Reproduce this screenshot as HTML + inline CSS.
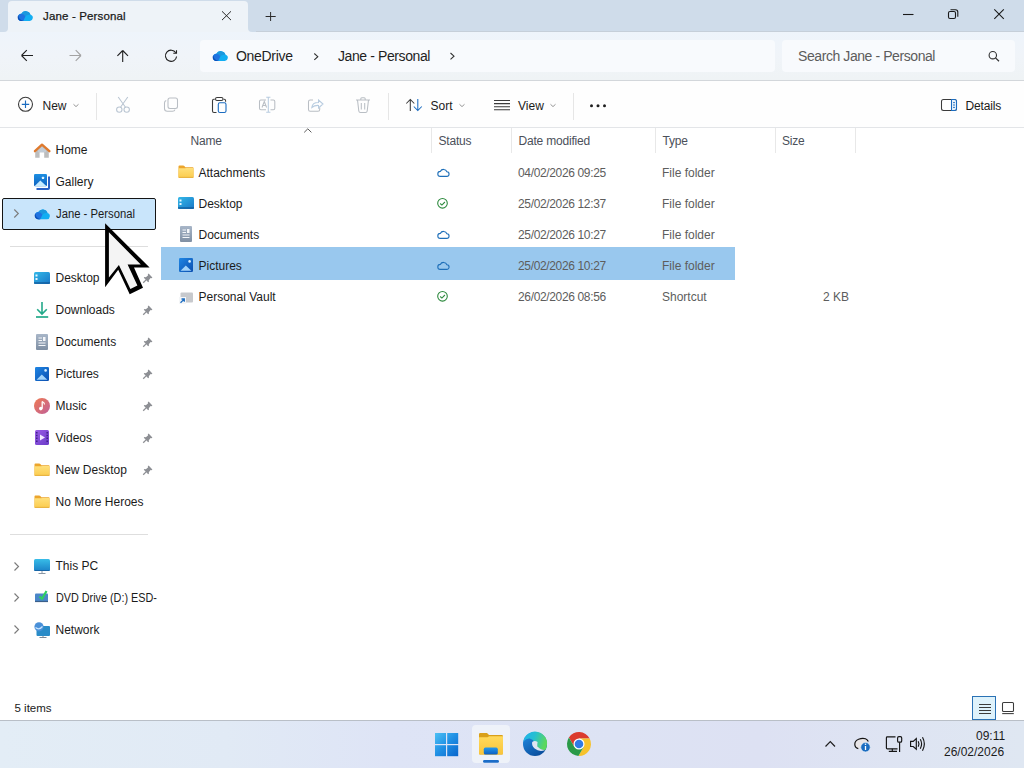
<!DOCTYPE html>
<html><head><meta charset="utf-8">
<style>
*{margin:0;padding:0;box-sizing:border-box}
html,body{width:1024px;height:768px;overflow:hidden;background:#fff;font-family:"Liberation Sans",sans-serif;font-size:12px;color:#1b1b1b}
.a{position:absolute}
.t{position:absolute;white-space:nowrap;line-height:12px;font-size:12px}
.g{color:#5d5d5d}
.h{color:#4b505a;letter-spacing:-0.2px}
.d{letter-spacing:-0.35px}
svg.ov{position:absolute;left:0;top:0;width:1024px;height:768px;overflow:visible}
</style></head><body>
<!-- ===== backgrounds ===== -->
<div class="a" style="left:0;top:0;width:1024px;height:32px;background:#cfdcea"></div>
<div class="a" style="left:0;top:31px;width:1024px;height:49px;background:linear-gradient(180deg,#eef4fb 0%,#f0f4f9 50%,#eff3f5 100%)"></div>
<div class="a" style="left:256px;top:31px;width:768px;height:1px;background:#c6cfd9"></div>
<!-- tab -->
<div class="a" style="left:8px;top:1px;width:240px;height:31px;background:#eef3f8;border-radius:4px 4px 0 0"></div>
<div class="a" style="left:0;top:24px;width:8px;height:8px;background:#eef3f8"></div>
<div class="a" style="left:0;top:16px;width:8px;height:16px;background:#cfdcea;border-radius:0 0 4px 0"></div>
<div class="a" style="left:248px;top:24px;width:8px;height:8px;background:#eef3f8"></div>
<div class="a" style="left:248px;top:16px;width:8px;height:16px;background:#cfdcea;border-radius:0 0 0 4px"></div>
<!-- breadcrumb + search -->
<div class="a" style="left:200px;top:40px;width:575px;height:32px;background:#f8fafd;border-radius:4px"></div>
<div class="a" style="left:782px;top:40px;width:233px;height:32px;background:#f8fafd;border-radius:4px"></div>
<div class="a" style="left:0;top:80px;width:1024px;height:1px;background:#d3d7db"></div>
<!-- toolbar -->
<div class="a" style="left:0;top:81px;width:1024px;height:46px;background:#fefefe"></div>
<div class="a" style="left:0;top:127px;width:1024px;height:1px;background:#e3e5e8"></div>
<div class="a" style="left:96px;top:93px;width:1px;height:27px;background:#e6e6e6"></div>
<div class="a" style="left:388px;top:93px;width:1px;height:27px;background:#e6e6e6"></div>
<div class="a" style="left:573px;top:93px;width:1px;height:27px;background:#e6e6e6"></div>
<!-- nav selection -->
<div class="a" style="left:2px;top:198px;width:154px;height:32px;background:#c9e5fb;border:1px solid #141414;border-radius:2px"></div>
<div class="a" style="left:10px;top:246px;width:138px;height:1px;background:#dedede"></div>
<div class="a" style="left:10px;top:534px;width:138px;height:1px;background:#dedede"></div>
<!-- column dividers -->
<div class="a" style="left:431px;top:128px;width:1px;height:25px;background:#e8e8e8"></div>
<div class="a" style="left:511px;top:128px;width:1px;height:25px;background:#e8e8e8"></div>
<div class="a" style="left:655px;top:128px;width:1px;height:25px;background:#e8e8e8"></div>
<div class="a" style="left:775px;top:128px;width:1px;height:25px;background:#e8e8e8"></div>
<div class="a" style="left:855px;top:128px;width:1px;height:25px;background:#e8e8e8"></div>
<!-- row selection -->
<div class="a" style="left:161px;top:247px;width:574px;height:33px;background:#99c8ee"></div>
<!-- status view buttons -->
<div class="a" style="left:972px;top:696px;width:24px;height:24px;background:#def2fb;border:1.5px solid #2a72b5"></div>
<!-- taskbar -->
<div class="a" style="left:0;top:720px;width:1024px;height:48px;background:linear-gradient(90deg,#e3edf6 0%,#e1eaf5 22%,#dee4f6 38%,#dde3f4 60%,#dde1f3 74%,#dfe7f2 100%)"></div>
<div class="a" style="left:0;top:720px;width:1024px;height:1px;background:#b9bfc7"></div>
<div class="a" style="left:472px;top:725px;width:38px;height:38px;background:#eef2f9;border-radius:4px"></div>

<!-- ===== icons ===== -->
<svg class="ov" viewBox="0 0 1024 768">
<defs>
<linearGradient id="od" x1="0" y1="0" x2="1" y2="1"><stop offset="0" stop-color="#0b58c0"/><stop offset="0.5" stop-color="#1a86e0"/><stop offset="1" stop-color="#32b8f2"/></linearGradient>
<linearGradient id="fold" x1="0" y1="0" x2="0" y2="1"><stop offset="0" stop-color="#ffe07c"/><stop offset="1" stop-color="#fbcc4e"/></linearGradient>
<linearGradient id="desk" x1="0" y1="0" x2="1" y2="1"><stop offset="0" stop-color="#33b8e8"/><stop offset="1" stop-color="#1a78c8"/></linearGradient>
<linearGradient id="doc" x1="0" y1="0" x2="0" y2="1"><stop offset="0" stop-color="#a8b6c8"/><stop offset="1" stop-color="#7f8fa3"/></linearGradient>
<linearGradient id="mus" x1="0" y1="0" x2="1" y2="1"><stop offset="0" stop-color="#f07a50"/><stop offset="1" stop-color="#c0609a"/></linearGradient>
<linearGradient id="vid" x1="0" y1="0" x2="1" y2="1"><stop offset="0" stop-color="#9a5ce6"/><stop offset="1" stop-color="#6a3cc8"/></linearGradient>
<linearGradient id="pc" x1="0" y1="0" x2="0" y2="1"><stop offset="0" stop-color="#38bde8"/><stop offset="1" stop-color="#1b82c8"/></linearGradient>
<linearGradient id="pic" x1="0" y1="0" x2="1" y2="1"><stop offset="0" stop-color="#1f86e4"/><stop offset="1" stop-color="#0b4fb0"/></linearGradient>
<linearGradient id="win" gradientUnits="userSpaceOnUse" x1="435" y1="733" x2="458" y2="756"><stop offset="0" stop-color="#4cc0f4"/><stop offset="0.5" stop-color="#1f8fe4"/><stop offset="1" stop-color="#0a66cc"/></linearGradient>
<g id="cloud"><path d="M3.9 10.9 H12.9 A3.1 3.1 0 0 0 13.5 4.8 A5 5 0 0 0 4.3 3.7 A3.65 3.65 0 0 0 3.9 10.9 Z" fill="#12aef2"/><path d="M4.3 3.7 A5 5 0 0 1 13.5 4.8 A3.1 3.1 0 0 0 12.2 4.7 Q9.6 4.9 8.2 6.6 Q6.8 4 4.3 3.7 Z" fill="#1b98de"/><path d="M3.9 10.9 A3.65 3.65 0 0 1 4.3 3.7 Q7.3 3.9 8.4 6.5 L6.3 10.9 Z" fill="#1f73e0"/><path d="M3.9 10.9 A3.65 3.65 0 0 1 1.5 4.9 Q1.2 9.2 6.3 10.9 Z" fill="#0b4db6"/></g>
<g id="folder"><path d="M0.5 1.4 Q0.5 0.5 1.4 0.5 H5 Q6 0.5 6.8 1.6 L7.4 2.2 H14.8 Q15.5 2.2 15.5 2.9 V12.2 Q15.5 12.8 14.9 12.8 H1.1 Q0.5 12.8 0.5 12.2 Z" fill="#eca52c"/><path d="M0.5 3.3 H7 L8.4 2.9 H15.5 V12.2 Q15.5 12.8 14.9 12.8 H1.1 Q0.5 12.8 0.5 12.2 Z" fill="url(#fold)"/><path d="M1 12.4 H15" stroke="#e2ac3c" stroke-width="0.8"/></g>
<g id="pin"><path d="M5.6 0.6 L9.4 4.4 L8.6 5.2 L7.6 5 L5.8 7.2 L6 8.6 L5.2 9.2 L0.8 4.8 L1.4 4 L2.8 4.2 L5 2.4 L4.8 1.4 Z" fill="#8d8f94"/><path d="M3.1 6.9 L0.2 9.8" stroke="#8d8f94" stroke-width="1.3"/></g>
<g id="chev"><path d="M0.5 0.5 L4.5 4.5 L0.5 8.5" fill="none" stroke="#7c7c7c" stroke-width="1.15"/></g><g id="chevd"><path d="M0.5 0.5 L4 3.7 L0.5 6.9" fill="none" stroke="#333" stroke-width="1.1"/></g>
<g id="scl"><path d="M0.5 0 H14.5" stroke="#1f6fc0"/></g>
</defs>

<!-- tab cloud -->
<use href="#cloud" x="17" y="10"/>
<!-- tab close -->
<path d="M222 11.3 L231 20.1 M231 11.3 L222 20.1" stroke="#2a2a2a" stroke-width="1"/>
<!-- new tab + -->
<path d="M265.6 16.5 H275.7 M270.6 12 V21" stroke="#2a2a2a" stroke-width="1"/>
<!-- window controls -->
<path d="M903 14.5 H913.5" stroke="#1a1a1a" stroke-width="1.1"/>
<rect x="948.5" y="11.5" width="7" height="7" rx="1.5" fill="none" stroke="#1a1a1a" stroke-width="1.1"/>
<path d="M950.5 9.7 H955.5 Q957.8 9.7 957.8 12 V16.8" fill="none" stroke="#1a1a1a" stroke-width="1.1"/>
<path d="M994.3 9.3 L1003.8 18.8 M1003.8 9.3 L994.3 18.8" stroke="#1a1a1a" stroke-width="1.1"/>

<!-- nav buttons -->
<path d="M21.5 55.5 H33 M21.5 55.5 L26.8 50.2 M21.5 55.5 L26.8 60.8" fill="none" stroke="#1f1f1f" stroke-width="1.1"/>
<path d="M81 55.5 H69.5 M81 55.5 L75.7 50.2 M81 55.5 L75.7 60.8" fill="none" stroke="#a3a3a3" stroke-width="1.1"/>
<path d="M122.7 50.5 V62 M122.7 50.5 L117.4 55.8 M122.7 50.5 L128 55.8" fill="none" stroke="#1f1f1f" stroke-width="1.1"/>
<path d="M175.8 52.8 A5.6 5.6 0 1 0 176.6 56.5" fill="none" stroke="#1f1f1f" stroke-width="1.1"/>
<path d="M176.5 50.2 V53.3 H173.3" fill="none" stroke="#1f1f1f" stroke-width="1.1"/>

<!-- breadcrumb -->
<use href="#cloud" x="212" y="50"/>
<use href="#chevd" x="313.8" y="53"/>
<use href="#chevd" x="450" y="52.5"/>
<!-- search icon -->
<circle cx="992.8" cy="55.2" r="3.7" fill="none" stroke="#303030" stroke-width="1.1"/>
<path d="M995.5 57.9 L999 61.3" stroke="#303030" stroke-width="1.2"/>

<!-- toolbar icons -->
<circle cx="25.5" cy="104.3" r="7" fill="none" stroke="#3b3b3b" stroke-width="1.1"/>
<path d="M21.8 104.3 H29.2 M25.5 100.6 V108" stroke="#1b6cc0" stroke-width="1.15"/>
<path d="M73.5 104.3 L76 106.6 L78.5 104.3" fill="none" stroke="#8a8a8a" stroke-width="0.9"/>
<!-- cut -->
<g fill="none" stroke="#b9c5d2" stroke-width="1.05">
<circle cx="119.3" cy="109.6" r="2.7"/><circle cx="126.7" cy="109.6" r="2.7"/>
<path d="M120.5 107.2 L127.8 97 M125.5 107.2 L118.2 97"/>
</g>
<!-- copy -->
<g fill="none" stroke="#b9bec4" stroke-width="1.05">
<rect x="168" y="98" width="9.5" height="10.5" rx="2"/>
<path d="M166.2 100.5 Q164.5 101 164.5 103 V108.5 Q164.5 111.3 167.3 111.3 H172.5 Q174.5 111.3 175 109.6"/>
</g>
<!-- paste -->
<path d="M214.8 99.3 H213.8 Q212.5 99.3 212.5 100.8 V111 Q212.5 112.5 214 112.5 H216.5" fill="none" stroke="#3b3b3b" stroke-width="1.1"/>
<path d="M223.5 99.3 H224.2 Q225.6 99.3 225.6 100.8 V101.8" fill="none" stroke="#3b3b3b" stroke-width="1.1"/>
<rect x="215.5" y="97.5" width="7.5" height="3" rx="1.5" fill="none" stroke="#3b3b3b" stroke-width="1.05"/>
<rect x="218.3" y="102.8" width="7.7" height="9.7" rx="1.6" fill="none" stroke="#1b6cc0" stroke-width="1.1"/>
<!-- rename -->
<g fill="none" stroke="#b9bec4" stroke-width="1.05">
<path d="M266 100 H260.8 Q259.5 100 259.5 101.5 V108.3 Q259.5 109.8 261 109.8 H266"/>
<path d="M270.5 100 H273.3 Q274.8 100 274.8 101.5 V108.3 Q274.8 109.8 273.3 109.8 H270.5"/>
<path d="M262 107.5 L264.3 101.5 L266.6 107.5 M262.8 105.5 H265.8"/>
</g>
<path d="M268.3 97.3 V112.3 M266.2 97.3 H270.4 M266.2 112.3 H270.4" fill="none" stroke="#b8cce0" stroke-width="1.05"/>
<!-- share -->
<g fill="none" stroke="#b9bec4" stroke-width="1.05">
<path d="M313 100 H310.2 Q308.5 100 308.5 101.7 V109.5 Q308.5 111.2 310.2 111.2 H318 Q319.7 111.2 319.7 109.5 V107.5"/>
</g>
<path d="M311.8 107.5 Q312.5 102.5 318.5 102.6 V100 L323 104 L318.5 108 V105.4 Q314.5 105.2 311.8 107.5 Z" fill="none" stroke="#b8cce0" stroke-width="1.05"/>
<!-- delete -->
<g fill="none" stroke="#b9bec4" stroke-width="1.05">
<path d="M356 100 H370 M360.8 100 V98.8 Q360.8 97.8 361.8 97.8 H364.2 Q365.2 97.8 365.2 98.8 V100"/>
<path d="M357.5 100 L358.8 111 Q359 112.5 360.5 112.5 H365.5 Q367 112.5 367.2 111 L368.5 100"/>
<path d="M361.3 103 V109.5 M364.7 103 V109.5"/>
</g>
<!-- sort -->
<path d="M410.3 99.5 V111 M406.3 103.5 L410.3 99.5 L414.3 103.5" fill="none" stroke="#3b3b3b" stroke-width="1.05"/>
<path d="M417.8 99 V110.5 M413.8 106.5 L417.8 110.5 L421.8 106.5" fill="none" stroke="#1b6cc0" stroke-width="1.05"/>
<path d="M459.5 104.3 L462 106.6 L464.5 104.3" fill="none" stroke="#8a8a8a" stroke-width="0.9"/>
<!-- view -->
<path d="M494 100.5 H510 M494 103.6 H510 M494 106.7 H510 M494 109.8 H510" stroke="#3b3b3b" stroke-width="1.05"/>
<path d="M550.5 104.3 L553 106.6 L555.5 104.3" fill="none" stroke="#8a8a8a" stroke-width="0.9"/>
<!-- more -->
<circle cx="591.5" cy="105.7" r="1.5" fill="#1f1f1f"/><circle cx="598" cy="105.7" r="1.5" fill="#1f1f1f"/><circle cx="604.5" cy="105.7" r="1.5" fill="#1f1f1f"/>
<!-- details -->
<rect x="941.5" y="99.5" width="15" height="11" rx="2" fill="none" stroke="#3b3b3b" stroke-width="1.05"/>
<path d="M951.5 99.5 H954.5 Q956.5 99.5 956.5 101.5 V108.5 Q956.5 110.5 954.5 110.5 H951.5 Z" fill="#e8f2fb" stroke="#1b6cc0" stroke-width="1.05"/>
<path d="M953 102.6 H955 M953 105 H955 M953 107.4 H955" stroke="#1b6cc0" stroke-width="0.9"/>

<!-- header sort caret -->
<path d="M304.2 132.4 L307.8 128.8 L311.4 132.4" fill="none" stroke="#5a5a5a" stroke-width="1"/>

<!-- ===== file rows ===== -->
<use href="#folder" x="178" y="165"/>
<!-- desktop -->
<g transform="translate(178,197)"><rect x="0" y="0" width="16" height="12" rx="1.5" fill="url(#desk)"/><rect x="1.5" y="2.5" width="2" height="2" fill="#e8f7ff"/><rect x="1.5" y="6" width="2" height="2" fill="#e8f7ff"/><path d="M0 11 H16" stroke="#115a9a" stroke-width="1.3"/></g>
<!-- documents -->
<g transform="translate(180,226)"><rect x="0" y="0" width="12" height="16" rx="1" fill="url(#doc)"/><path d="M2.5 4 H6 M2.5 6.5 H6 M2.5 9 H9.5 M2.5 11.5 H9.5" stroke="#f4f6f9" stroke-width="1.2"/><rect x="7" y="3" width="2.5" height="4" fill="#f4f6f9"/></g>
<!-- pictures -->
<g transform="translate(179,258)"><rect x="0" y="0" width="14" height="14" rx="1.2" fill="url(#pic)"/><path d="M1.6 12.8 L6.8 7.4 L12.4 12.8 Z" fill="#a3d4fa"/><circle cx="10.6" cy="3.4" r="1.3" fill="#d8f0ff"/></g>
<!-- personal vault shortcut -->
<g transform="translate(179,292)"><rect x="1.5" y="0.5" width="12.5" height="10" rx="1" fill="#c7c9cd"/><rect x="0" y="5" width="7" height="7" fill="#f4f6f8"/><path d="M1.5 10.8 L5.2 7.1 M2.5 7 H5.3 V9.8" fill="none" stroke="#1b6cc0" stroke-width="1.3"/></g>

<!-- status icons -->
<g fill="none" stroke="#1e6fb9" stroke-width="1.1">
<path d="M440.3 176.4 H446.6 A2.3 2.3 0 0 0 446.9 171.8 A3.6 3.6 0 0 0 440.3 171.4 A2.5 2.5 0 0 0 440.3 176.4 Z"/>
<path d="M440.3 238.4 H446.6 A2.3 2.3 0 0 0 446.9 233.8 A3.6 3.6 0 0 0 440.3 233.4 A2.5 2.5 0 0 0 440.3 238.4 Z"/>
<path d="M440.3 269.4 H446.6 A2.3 2.3 0 0 0 446.9 264.8 A3.6 3.6 0 0 0 440.3 264.4 A2.5 2.5 0 0 0 440.3 269.4 Z"/>
</g>
<g fill="none" stroke="#2d8a3e" stroke-width="1.1">
<circle cx="442.5" cy="203.3" r="4.8"/><path d="M440.2 203.5 L441.9 205.1 L444.9 202"/>
<circle cx="442.5" cy="296.3" r="4.8"/><path d="M440.2 296.5 L441.9 298.1 L444.9 295"/>
</g>

<!-- ===== nav pane icons ===== -->
<!-- home -->
<g transform="translate(34,143)"><path d="M1.2 7.6 V14.7 H5.6 V9.2 H10.2 V14.7 H14.8 V7.6 L8 1.8 Z" fill="#bdbdbd"/><path d="M4 7.6 L8 3.6 L12.2 7.6 V9.2 H4 Z" fill="#c2ccd6"/><path d="M0.9 8.2 L8 1.6 L15.4 8.2" fill="none" stroke="#df7a2e" stroke-width="2.3" stroke-linejoin="round" stroke-linecap="round"/></g>
<!-- gallery -->
<linearGradient id="gal" x1="0" y1="0" x2="0" y2="1"><stop offset="0" stop-color="#1d8fe2"/><stop offset="1" stop-color="#0f62c0"/></linearGradient><g transform="translate(34,174)"><path d="M15 2.5 V14.2 Q15 15 14.2 15 H2.5" fill="none" stroke="#2a62c6" stroke-width="2"/><rect x="0" y="0" width="13" height="12.2" rx="1.2" fill="url(#gal)"/><path d="M0.5 12.2 L6.3 6.6 L12.6 12.2 Z" fill="#c6ebff"/><rect x="7.9" y="2.8" width="2.2" height="2.2" rx="0.5" fill="#dff4ff"/></g>
<!-- jane cloud -->
<use href="#cloud" x="34" y="208.3"/>
<use href="#chev" x="13.8" y="209"/>
<!-- desktop -->
<g transform="translate(34,272)"><rect x="0" y="0" width="16" height="12" rx="1.5" fill="url(#desk)"/><rect x="1.5" y="2.5" width="2" height="2" fill="#e8f7ff"/><rect x="1.5" y="6" width="2" height="2" fill="#e8f7ff"/><path d="M0 11 H16" stroke="#115a9a" stroke-width="1.3"/></g>
<!-- downloads -->
<g transform="translate(36,302)" fill="none" stroke="#23a98a" stroke-width="1.6"><path d="M6 0 V12 M1.2 7.2 L6 12 L10.8 7.2"/><path d="M0 15 H12.2" stroke-width="1.7"/></g>
<!-- documents -->
<g transform="translate(36,334)"><rect x="0" y="0" width="12" height="16" rx="1" fill="url(#doc)"/><path d="M2.5 4 H6 M2.5 6.5 H6 M2.5 9 H9.5 M2.5 11.5 H9.5" stroke="#f4f6f9" stroke-width="1.2"/><rect x="7" y="3" width="2.5" height="4" fill="#f4f6f9"/></g>
<!-- pictures -->
<g transform="translate(35,367)"><rect x="0" y="0" width="14" height="14" rx="1.2" fill="url(#pic)"/><path d="M1.6 12.8 L6.8 7.4 L12.4 12.8 Z" fill="#a3d4fa"/><circle cx="10.6" cy="3.4" r="1.3" fill="#d8f0ff"/></g>
<!-- music -->
<g transform="translate(34,398)"><circle cx="8" cy="8" r="8" fill="url(#mus)"/><path d="M8.2 3.5 V10.5" stroke="#fff" stroke-width="1.3"/><circle cx="6.8" cy="10.6" r="1.8" fill="#fff"/><path d="M8.2 3.5 Q10.5 4.5 10.5 6.5" fill="none" stroke="#fff" stroke-width="1.2"/></g>
<!-- videos -->
<g transform="translate(35,430)"><rect x="0" y="0" width="14" height="15" rx="1.5" fill="url(#vid)"/><path d="M5 4.5 V10.5 L10 7.5 Z" fill="#f0e8ff"/><path d="M1.8 2 V13 M12.2 2 V13" stroke="#3a1f80" stroke-width="1.4" stroke-dasharray="1.5 1.3"/></g>
<!-- folders -->
<use href="#folder" x="34" y="463"/>
<use href="#folder" x="34" y="495"/>
<!-- pins -->
<use href="#pin" x="143" y="273"/>
<use href="#pin" x="143" y="305"/>
<use href="#pin" x="143" y="337"/>
<use href="#pin" x="143" y="369"/>
<use href="#pin" x="143" y="401"/>
<use href="#pin" x="143" y="433"/>
<use href="#pin" x="143" y="465"/>
<!-- this pc -->
<use href="#chev" x="14" y="562"/>
<g transform="translate(34,559)"><rect x="0" y="0" width="16" height="12" rx="1.5" fill="url(#pc)"/><path d="M0.5 11.5 H15.5" stroke="#1766a8" stroke-width="1"/><path d="M8 12 V14 M4.5 14.5 H11.5" stroke="#8a97a5" stroke-width="1"/></g>
<!-- dvd -->
<use href="#chev" x="14" y="593"/>
<g transform="translate(35,590)"><rect x="0" y="3.5" width="13" height="8.5" rx="1" fill="#4a86c8"/><path d="M0 11.5 H13" stroke="#3b5f8a" stroke-width="1.2"/><path d="M4.5 6.5 L7 8.8 L11.5 1" fill="none" stroke="#2ed060" stroke-width="2.2"/></g>
<!-- network -->
<use href="#chev" x="14" y="625"/>
<g transform="translate(34,622)"><rect x="2.5" y="4" width="13.5" height="10" rx="1" fill="#2a8cc8"/><path d="M9 14 V15.5 M5.5 15.5 H12.5" stroke="#7d8a98" stroke-width="1"/><circle cx="5" cy="4.8" r="4.6" fill="#4a90d8"/><path d="M1.5 5.5 Q5 8.5 8.5 4.5" fill="none" stroke="#c8e4ff" stroke-width="1.2"/></g>

<!-- status bar view buttons -->
<path d="M979 704.5 H991 M979 707.5 H991 M979 710.5 H991 M979 713.5 H991" stroke="#3b3b3b" stroke-width="1.05"/>
<rect x="1002.5" y="702.5" width="11" height="9" rx="1" fill="none" stroke="#3b3b3b" stroke-width="1.05"/>
<path d="M1002.2 713.6 H1013.8" stroke="#3b3b3b" stroke-width="1.05"/>

<!-- ===== taskbar ===== -->
<g fill="url(#win)"><rect x="435" y="733" width="11" height="11"/><rect x="447.2" y="733" width="11" height="11"/><rect x="435" y="745.2" width="11" height="11"/><rect x="447.2" y="745.2" width="11" height="11"/></g>
<!-- explorer -->
<linearGradient id="exb" x1="0" y1="0" x2="0" y2="1"><stop offset="0" stop-color="#ffda5c"/><stop offset="1" stop-color="#f8c43a"/></linearGradient><linearGradient id="exr" x1="0" y1="0" x2="0" y2="1"><stop offset="0" stop-color="#2298ec"/><stop offset="1" stop-color="#0e5fc0"/></linearGradient><g transform="translate(479,733)"><path d="M0 1.2 Q0 0 1.2 0 H8 L10 2 H22.8 Q24 2 24 3.2 V20.5 Q24 21.5 23 21.5 H1 Q0 21.5 0 20.5 Z" fill="#d9a01a"/><path d="M0 4.2 H8.5 L10.2 3.2 H24 V20.5 Q24 21.5 23 21.5 H1 Q0 21.5 0 20.5 Z" fill="url(#exb)"/><rect x="4.8" y="14.6" width="14" height="7" rx="1.6" fill="url(#exr)"/></g>
<rect x="483" y="760" width="16" height="2.8" rx="1.4" fill="#1b6cc8"/>
<!-- edge -->
<defs>
<linearGradient id="eb" x1="0" y1="0" x2="0.6" y2="1"><stop offset="0" stop-color="#2290e8"/><stop offset="1" stop-color="#0b4f9e"/></linearGradient>
<linearGradient id="eg" x1="0" y1="0" x2="1" y2="0.3"><stop offset="0" stop-color="#1fb2ec"/><stop offset="0.5" stop-color="#26bfd2"/><stop offset="1" stop-color="#5ad85e"/></linearGradient>
</defs>
<g transform="translate(535,744)">
<circle r="12" fill="url(#eb)"/>
<path d="M-11.7 -2.6 A12 12 0 1 1 11.6 3 Q11 6 9.8 6.3 Q5 5.6 2.4 3.6 Q1.6 1 -0.2 -1.8 Q-2.3 -4.6 -5.3 -5.4 Q-8.8 -5.6 -11.7 -2.6 Z" fill="url(#eg)"/>
<path d="M-2.8 -2 Q-0.5 -3.8 2.6 -2.1 Q2 0.5 2.3 2.4 Q4.8 5.4 9.8 6.3 Q4 8.2 -0.4 4.6 Q-3.6 1.5 -2.8 -2 Z" fill="#dfe5f2"/>
</g>
<!-- chrome -->
<g transform="translate(579,744)">
<path d="M-10.095 -6.487 A12 12 0 0 1 10.665 -5.5 L0 -5.5 L-4.763 2.75 Z" fill="#db3b2e"/>
<path d="M10.665 -5.5 A12 12 0 0 1 -0.57 11.986 L4.763 2.75 L0 -5.5 Z" fill="#f6c22c"/>
<path d="M-0.57 11.986 A12 12 0 0 1 -10.095 -6.487 L-4.763 2.75 L4.763 2.75 Z" fill="#2a9a48"/>
<circle r="5.5" fill="#fff"/><circle r="4.3" fill="#2f7be6"/>
</g>
<!-- tray -->
<path d="M825.5 746.5 L830.3 741.5 L835 746.5" fill="none" stroke="#1f1f1f" stroke-width="1.2"/>
<path d="M858.3 748.6 Q854.8 747.8 854.8 744.3 Q854.8 740.6 858.6 739.2 Q862.5 737.8 865.5 738.8 Q867.4 739.6 868.3 741.6 L864 748.6 Z" fill="#e9e6e8"/>
<path d="M858.3 748.6 Q854.8 747.8 854.8 744.3 Q854.8 740.6 858.6 739.2 Q862.5 737.8 865.5 738.8 Q867.4 739.6 868.3 741.6" fill="none" stroke="#141414" stroke-width="1.2"/>
<circle cx="865.5" cy="747.2" r="4.7" fill="#1a6cc0" stroke="#e6f0f8" stroke-width="0.6"/><path d="M865.5 746 V750" stroke="#fff" stroke-width="1.3"/><circle cx="865.5" cy="744.3" r="0.8" fill="#fff"/>
<g fill="none" stroke="#141414" stroke-width="1.15">
<path d="M895.5 736.9 H887.3 Q886.4 736.9 886.4 737.8 V747.9 Q886.4 748.8 887.3 748.8 H897.5"/>
<path d="M892.3 748.8 V751.2 M888.8 751.3 H897"/>
<rect x="897.6" y="736.6" width="4.1" height="5.6" rx="1.3"/><path d="M899.6 742.2 V751.9"/>
<path d="M910.6 741.4 H913.2 L916.3 738.6 V749.2 L913.2 746.5 H910.6 Z"/>
<path d="M918.2 741.3 Q919.7 744 918.2 746.7 M920.3 739.3 Q922.9 744 920.3 748.7 M922.5 737.3 Q926.2 744 922.5 750.7"/>
</g>
</svg>

<!-- ===== text ===== -->
<div class="t" style="left:43px;top:10px;font-size:11.5px;letter-spacing:0.15px;color:#1a1a1a;-webkit-text-stroke:0.25px #1a1a1a">Jane - Personal</div>
<div class="t" style="left:236px;top:49px;font-size:14px;line-height:14px;letter-spacing:-0.3px;color:#1f1f1f">OneDrive</div>
<div class="t" style="left:338px;top:49px;font-size:14px;line-height:14px;letter-spacing:-0.4px;color:#1f1f1f">Jane - Personal</div>
<div class="t" style="left:798px;top:49px;font-size:14px;line-height:14px;letter-spacing:-0.42px;color:#5c5c5c">Search Jane - Personal</div>

<div class="t" style="left:42.5px;top:100px">New</div>
<div class="t" style="left:430.5px;top:100px">Sort</div>
<div class="t" style="left:518px;top:100px">View</div>
<div class="t" style="left:965.5px;top:100px;letter-spacing:-0.15px">Details</div>

<div class="t" style="left:55.5px;top:144px">Home</div>
<div class="t" style="left:55.5px;top:176px">Gallery</div>
<div class="t" style="left:55.5px;top:208px;transform:scaleX(0.94);transform-origin:0 0">Jane - Personal</div>
<div class="t" style="left:55.5px;top:272px">Desktop</div>
<div class="t" style="left:55.5px;top:304px">Downloads</div>
<div class="t" style="left:55.5px;top:336px">Documents</div>
<div class="t" style="left:55.5px;top:368px">Pictures</div>
<div class="t" style="left:55.5px;top:400px">Music</div>
<div class="t" style="left:55.5px;top:432px">Videos</div>
<div class="t" style="left:55.5px;top:464px">New Desktop</div>
<div class="t" style="left:55.5px;top:496px">No More Heroes</div>
<div class="t" style="left:55.5px;top:560px">This PC</div>
<div class="t" style="left:55.5px;top:592px;transform:scaleX(0.9);transform-origin:0 0">DVD Drive (D:) ESD-</div>
<div class="t" style="left:55.5px;top:624px">Network</div>

<div class="t h" style="left:190.5px;top:135px">Name</div>
<div class="t h" style="left:438.5px;top:135px">Status</div>
<div class="t h" style="left:518.5px;top:135px">Date modified</div>
<div class="t h" style="left:662.5px;top:135px">Type</div>
<div class="t h" style="left:782px;top:135px">Size</div>

<div class="t" style="left:198.5px;top:167px">Attachments</div>
<div class="t" style="left:198.5px;top:198px">Desktop</div>
<div class="t" style="left:198.5px;top:229px">Documents</div>
<div class="t" style="left:198.5px;top:260px">Pictures</div>
<div class="t" style="left:198.5px;top:291px">Personal Vault</div>
<div class="t g d" style="left:518px;top:167px">04/02/2026 09:25</div>
<div class="t g d" style="left:518px;top:198px">25/02/2026 12:37</div>
<div class="t g d" style="left:518px;top:229px">25/02/2026 10:27</div>
<div class="t g d" style="left:518px;top:260px">25/02/2026 10:27</div>
<div class="t g d" style="left:518px;top:291px">26/02/2026 08:56</div>
<div class="t g" style="left:662px;top:167px">File folder</div>
<div class="t g" style="left:662px;top:198px">File folder</div>
<div class="t g" style="left:662px;top:229px">File folder</div>
<div class="t g" style="left:662px;top:260px">File folder</div>
<div class="t g" style="left:662px;top:291px">Shortcut</div>
<div class="t g" style="left:823px;top:291px">2 KB</div>

<div class="t" style="left:14.5px;top:702px;font-size:11.5px">5 items</div>
<div class="t" style="left:976px;top:730px">09:11</div>
<div class="t" style="left:944px;top:746px">26/02/2026</div>

<!-- cursor -->
<svg class="ov" viewBox="0 0 1024 768">
<path d="M105.1 223.2 L105.1 287.2 L118.2 269.8 L129.7 294.3 L143 287.8 L134 267.6 L149.6 267.6 Z" fill="#000"/>
<path d="M108.9 232.2 L108.9 277.4 L118.9 265 L130.4 288.9 L137.4 285.5 L127.6 264.6 L140.8 264.6 Z" fill="#f4f4f4"/>
</svg>
</body></html>
